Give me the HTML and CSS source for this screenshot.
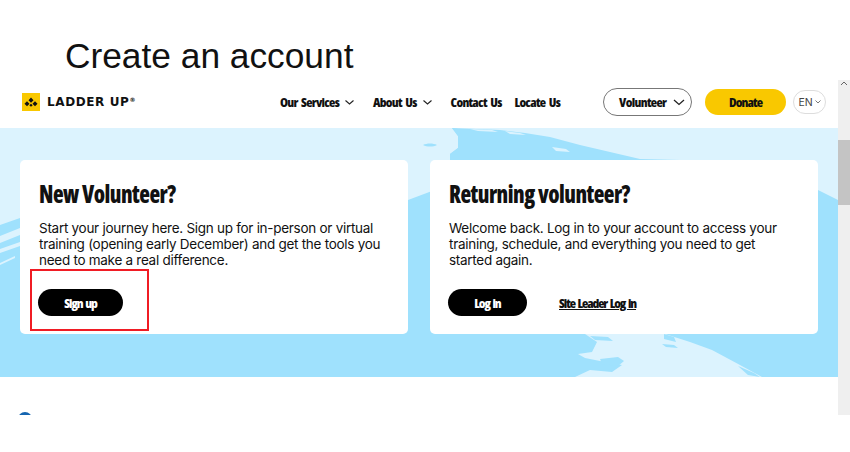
FILE: index.html
```html
<!DOCTYPE html>
<html lang="en">
<head>
    <meta charset="UTF-8">
    <title>Create an account</title>
    <link rel="stylesheet" href="styles.css">
</head>
<body>
<h1 class="title">Create an account</h1>
<div class="frame">
    <div class="site">
        <header class="header">
            <a class="logo" href="#">
                <svg class="logo-mark" width="18" height="18" viewBox="0 0 18 18">
                    <rect width="18" height="18" fill="#f9c800"/>
                    <path d="M9 4.6l2.5 2.6L9 9.8 6.500 7.200zM5 8.300l2.500 2.500L5 13.300 2.500 10.800zM13 8.300l2.500 2.500-2.500 2.500-2.500-2.500zM9 10.800l1.700 1.500L9 13.800l-1.700-1.500z" fill="#111"/>
                </svg>
                <span class="logo-text">LADDER UP<sup class="reg">®</sup></span>
            </a>
            <nav class="nav">
                <a class="nav-link" href="#">Our Services
                    <svg class="chev" width="9" height="5" viewBox="0 0 9 5"><path d="M.5.500l4 3.500 4-3.500" fill="none" stroke="#222" stroke-width="1.100"/></svg>
                </a>
                <a class="nav-link" href="#">About Us
                    <svg class="chev" width="9" height="5" viewBox="0 0 9 5"><path d="M.5.500l4 3.500 4-3.500" fill="none" stroke="#222" stroke-width="1.100"/></svg>
                </a>
                <a class="nav-link" href="#">Contact Us</a>
                <a class="nav-link" href="#">Locate Us</a>
            </nav>
            <a class="volunteer" href="#">Volunteer
                <svg class="chev-big" width="12" height="7" viewBox="0 0 12 7"><path d="M1 1l5 4.500L11 1" fill="none" stroke="#222" stroke-width="1.300"/></svg>
            </a>
            <a class="donate" href="#">Donate</a>
            <a class="lang" href="#">EN
                <svg width="6" height="4" viewBox="0 0 6 4"><path d="M.5.500L3 3 5.500.500" fill="none" stroke="#555" stroke-width=".8"/></svg>
            </a>
        </header>

        <section class="hero">
            <svg class="brush" width="838" height="249" viewBox="0 0 838 249">
                <path fill="#dcf3fe" d="M0 0H838V72L818 62 640 40 575 25 548 20 525 8 470 3 452 0 458 8 458 20 450 26 450 34 440 60 408 72 300 85 150 80 60 84 20 90 0 97Z"/>
                <path fill="#9fe1fd" d="M452 0L500 2 525 5 550 9 580 17 610 24 640 31 680 32 660 60 450 60 450 26 458 20 458 8Z"/>
                <path fill="#dcf3fe" d="M470 1l22 1 6 2-20-1zM505 3l15 2 6 2-16-1zM552 19l14 2 4 3-14-1z"/>
                <path fill="#9fe1fd" d="M423 17c4-2 10-2 14 0-4 2-10 2-14 0z"/>
                <path fill="#dcf3fe" d="M0 108L20 100 20 107 0 115zM0 121l20-7 0 4-20 7zM0 135l15-7 0 2-15 7z"/>
                <path fill="#dcf3fe" d="M585 206L665 206 690 214 712 222 740 237 762 249H575L590 242 612 244 622 237 600 233 585 230 578 226 592 224 597 214Z"/>
                <path fill="#9fe1fd" d="M664 206l10 3 2 5-12-3zM662 216l12 1 4 3-12-1zM590 208l18 1 5 4-18-1zM738 238l16 7 6 4-12-2zM600 231l18-2 6 4-6 5-16-2z"/>
            </svg>
            <div class="card">
                <h2 class="card-title">New Volunteer?</h2>
                <p class="card-text">Start your journey here. Sign up for in-person or virtual training (opening early December) and get the tools you need to make a real difference.</p>
                <div class="card-actions">
                    <a class="btn btn-signup" href="#">Sign up</a>
                </div>
                <div class="highlight"></div>
            </div>
            <div class="card">
                <h2 class="card-title">Returning volunteer?</h2>
                <p class="card-text">Welcome back. Log in to your account to access your training, schedule, and everything you need to get started again.</p>
                <div class="card-actions">
                    <a class="btn btn-login" href="#">Log in</a>
                    <a class="leader-link" href="#">Site Leader Log in</a>
                </div>
            </div>
        </section>

        <div class="below">
            <div class="dot"></div>
        </div>
    </div>
    <div class="scrollbar">
        <svg class="scroll-arrow" width="8" height="5" viewBox="0 0 8 5"><path d="M1 4l3-3 3 3" fill="none" stroke="#666" stroke-width="1"/></svg>
        <div class="scroll-thumb"></div>
    </div>
</div>
</body>
</html>
```

FILE: styles.css
```css
* {
    margin: 0;
    padding: 0;
    box-sizing: border-box;
}
body {
    background: #fff;
    color: #111;
    font-family: "Inter", "Liberation Sans", sans-serif;
}
a {
    color: inherit;
    text-decoration: none;
}
.title {
    height: 80px;
    padding: 33px 0 0 65px;
    font-family: "Liberation Sans", Arial, sans-serif;
    font-size: 35.3px;
    line-height: 46px;
    font-weight: 400;
}
.frame {
    display: flex;
    width: 850px;
    height: 335px;
    overflow: hidden;
}
.site {
    width: 838px;
}
.header {
    display: flex;
    align-items: center;
    height: 48px;
    padding: 0 0 4px 22px;
}
.logo {
    display: flex;
    align-items: center;
    width: 258px;
}
.logo-text {
    margin-left: 7px;
    font-family: "DejaVu Sans", sans-serif;
    font-size: 12px;
    font-weight: 700;
    letter-spacing: .6px;
    white-space: nowrap;
}
.reg {
    font-size: 6px;
    vertical-align: 4px;
    line-height: 0;
}
.nav {
    display: flex;
    width: 323px;
}
.nav-link,
.volunteer,
.donate,
.btn,
.leader-link,
.card-title {
    font-family: "Open Sans", "Roboto", sans-serif;
    font-stretch: 75%;
    font-weight: 800;
}
.nav-link {
    display: flex;
    align-items: center;
    margin-right: 13px;
    font-size: 13px;
    letter-spacing: -.75px;
    word-spacing: 2px;
    white-space: nowrap;
}
.chev {
    margin: 1px 6px 0 6px;
}
.volunteer {
    display: flex;
    align-items: center;
    gap: 7px;
    width: 89px;
    height: 28px;
    padding-left: 15px;
    border: 1px solid #777;
    border-radius: 14px;
    font-size: 13px;
    letter-spacing: -.65px;
}
.donate {
    display: flex;
    align-items: center;
    justify-content: center;
    width: 81px;
    height: 26px;
    margin-left: 13px;
    background: #f9c800;
    border-radius: 13px;
    font-size: 13px;
    letter-spacing: -.9px;
}
.lang {
    display: flex;
    align-items: center;
    justify-content: center;
    gap: 2px;
    width: 33px;
    height: 24px;
    margin-left: 7px;
    border: 1px solid #ddd;
    border-radius: 12px;
    color: #444;
    font-size: 10.5px;
}
.hero {
    position: relative;
    display: grid;
    grid-template-columns: 388px 388px;
    gap: 22px;
    height: 249px;
    padding: 32px 20px 43px;
    background: #9fe1fd;
    overflow: hidden;
}
.brush {
    position: absolute;
    top: 0;
    left: 0;
}
.card {
    position: relative;
    padding: 19px 19px 0;
    background: #fff;
    border-radius: 5px;
}
.card-title {
    font-size: 25px;
    line-height: 28px;
    letter-spacing: -.6px;
    transform: scaleX(.88);
    transform-origin: left;
    white-space: nowrap;
}
.card-text {
    max-width: 345px;
    margin-top: 13px;
    font-size: 13.5px;
    letter-spacing: -.28px;
    line-height: 16px;
    color: #111;
}
.card-actions {
    display: flex;
    align-items: center;
    margin: 21px 0 0 -1px;
}
.btn {
    display: flex;
    align-items: center;
    justify-content: center;
    height: 27px;
    background: #000;
    border-radius: 14px;
    color: #fff;
    font-size: 13px;
    letter-spacing: -1.1px;
    word-spacing: 1.500px;
}
.btn-signup {
    width: 85px;
}
.btn-login {
    width: 79px;
}
.leader-link {
    margin-left: 32px;
    font-size: 13px;
    letter-spacing: -1.1px;
    word-spacing: 1.500px;
    text-decoration: underline;
}
.highlight {
    position: absolute;
    left: 10px;
    top: 109px;
    width: 119px;
    height: 62px;
    border: 2px solid #f01c24;
}
.below {
    height: 38px;
    padding: 35px 0 0 18px;
    overflow: hidden;
}
.dot {
    width: 14px;
    height: 14px;
    background: #1565b0;
    border-radius: 50%;
}
.scrollbar {
    width: 12px;
    background: #efefef;
    text-align: center;
}
.scroll-arrow {
    display: block;
    margin: 1px auto 0;
}
.scroll-thumb {
    height: 65px;
    margin-top: 54px;
    background: #c4c4c4;
}
```
